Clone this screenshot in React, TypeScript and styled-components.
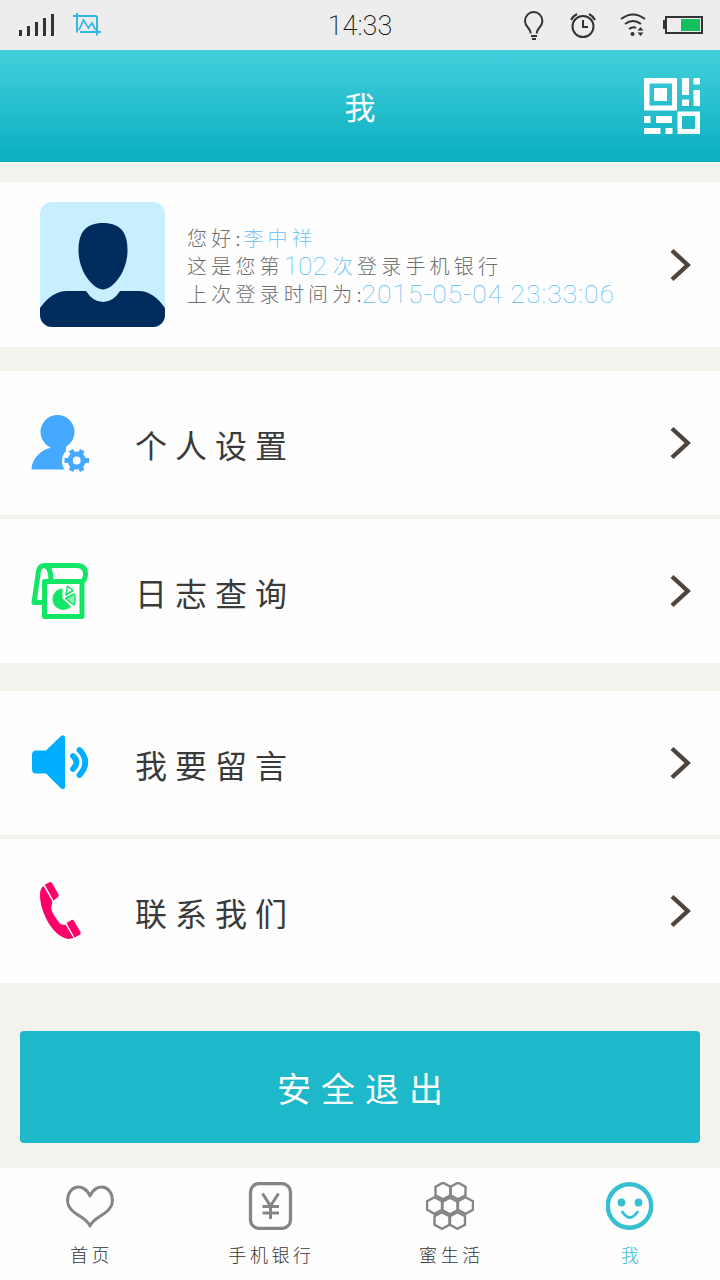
import React from "react";
import styled, { createGlobalStyle } from "styled-components";

const Global = createGlobalStyle`
  * { box-sizing: border-box; }
  body {
    margin: 0;
    background: #f3f2ed;
    font-family: "Noto Sans CJK SC", sans-serif;
    font-weight: 300;
  }
  svg { display: block; flex: none; }
`;

const Screen = styled.div`
  width: 720px;
  height: 1280px;
  display: flex;
  flex-direction: column;
  background: #f3f2ed;
  overflow: hidden;
`;

const StatusBar = styled.div`
  height: 50px;
  flex: none;
  display: grid;
  grid-template-columns: 1fr auto 1fr;
  align-items: center;
  background: #ededed;
  color: #111;
`;

const StatusGroup = styled.div<{ $end?: boolean }>`
  display: flex;
  align-items: center;
  justify-content: ${(p) => (p.$end ? "flex-end" : "flex-start")};
  padding: ${(p) => (p.$end ? "0 16px 0 0" : "0 0 0 19px")};
`;

const Signal = styled.div`
  margin-right: 18px;
`;

const Clock = styled.time`
  padding-top: 2px;
  font-family: Roboto, sans-serif;
  font-size: 27px;
  font-weight: 200;
  line-height: 48px;
`;

const Header = styled.header`
  height: 112px;
  flex: none;
  display: grid;
  grid-template-columns: 1fr auto 1fr;
  align-items: center;
  padding: 0 20px;
  background: linear-gradient(#43cfdb, #0aafc1);
  color: #fff;
`;

const Title = styled.h1`
  grid-column: 2;
  margin: 0;
  font-size: 31px;
  font-weight: 400;
  line-height: 112px;
`;

const CodeButton = styled.div`
  justify-self: end;
`;

const Profile = styled.section`
  height: 165px;
  flex: none;
  margin-top: 20px;
  padding: 0 29px 0 40px;
  display: flex;
  align-items: center;
  background: #fefefe;
`;

const Avatar = styled.div`
  width: 125px;
  height: 125px;
  border-radius: 12px;
  overflow: hidden;
  background: #c8efff;
`;

const Greeting = styled.div`
  flex: 1;
  margin-left: 22px;
  padding-top: 2px;
  color: #6f6f6f;
`;

const Line = styled.div`
  display: flex;
  height: 28px;
  font-size: 20px;
  line-height: 28px;
  letter-spacing: 4.2px;
  white-space: pre;
`;

const Accent = styled.span`
  color: #7cc5fa;
`;

const Colon = styled.span<{ $width: number }>`
  width: ${(p) => p.$width}px;
  letter-spacing: 0;
`;

const Digits = styled.span<{ $width: number; $spacing: number }>`
  width: ${(p) => p.$width}px;
  font-family: Roboto, sans-serif;
  font-size: 26.5px;
  font-weight: 100;
  letter-spacing: ${(p) => p.$spacing}px;
  color: #5ab8fa;
`;

const Group = styled.section<{ $gap: number }>`
  flex: none;
  margin-top: ${(p) => p.$gap}px;
  display: flex;
  flex-direction: column;
  gap: 4px;
`;

const Row = styled.div`
  height: 144px;
  padding: 0 29px 0 30px;
  display: flex;
  align-items: center;
  background: #fefefe;
`;

const RowLabel = styled.span`
  flex: 1;
  margin-left: 43px;
  padding-top: 1px;
  color: #3a3a3a;
  font-size: 32px;
  font-weight: 400;
  line-height: 48px;
  letter-spacing: 8px;
`;

const Logout = styled.button`
  height: 112px;
  flex: none;
  margin: 48px 20px 0;
  padding: 0 0 0 10px;
  border: 0;
  border-radius: 4px;
  background: #1db8c9;
  color: #fff;
  font: 400 34px "Noto Sans CJK SC", sans-serif;
  letter-spacing: 10px;
`;

const TabBar = styled.nav`
  height: 112px;
  flex: none;
  margin-top: 25px;
  display: grid;
  grid-template-columns: repeat(4, 1fr);
  background: #fefefe;
`;

const Tab = styled.div<{ $active?: boolean }>`
  display: flex;
  flex-direction: column;
  align-items: center;
  padding-top: 14px;
  color: ${(p) => (p.$active ? "#35bfd0" : "#333")};
`;

const TabLabel = styled.span`
  margin-top: 11px;
  padding-left: 3px;
  font-size: 18px;
  line-height: 27px;
  letter-spacing: 3.6px;
`;

const Chevron = () => (
  <svg width="22" height="34" viewBox="0 0 22 34" fill="none" stroke="#4e443e" strokeWidth="4.4">
    <path d="M3 2.500 18.700 17 3 31.500" />
  </svg>
);

const SignalIcon = () => (
  <svg width="36" height="24" viewBox="0 0 36 24" fill="#333">
    <path d="M0 17h3v6H0zM8 13h3v10H8zM16 9h3v14h-3zM24 5h3v18h-3zM32 1h3v22h-3z" />
  </svg>
);

const CaptureIcon = () => (
  <svg width="30" height="26" viewBox="0 0 30 26" fill="none" stroke="#30b8e8" strokeWidth="2">
    <path d="M0 4H22.500q1.500 0 1.500 1.500V23.500M4 1V20.500M7 20H28" />
    <path d="M6 18 10.500 8l5 8 3.500-5 3.500 7" strokeWidth="1.700" />
  </svg>
);

const StatusIcons = () => (
  <svg width="182" height="36" viewBox="522 7 182 36" fill="none" stroke="#333" strokeWidth="2">
    <path d="M530.700 33.500c0-6-5.700-6-5.700-12.500a8.700 9 0 0 1 17.400 0c0 6.500-5.700 6.500-5.700 12.500M531 36h6M532 39h4" />
    <circle cx="583" cy="26.500" r="10.500" />
    <path d="M583 20v7h5M571 20q2-4 6-6M589 14q4 2 6 6" />
    <path d="M621 19q12-9 24 0M625 24q8-6 16 0M629 29q4-3 7-1" />
    <circle cx="632.500" cy="34" r="2" fill="#333" stroke="none" />
    <path d="M640.500 27l3 3.500h-6zM640.500 36l3-3.500h-6z" fill="#333" stroke="none" />
    <path d="M666 17h36v16h-36z" />
    <path d="M663 20h3v9h-3z" fill="#333" stroke="none" />
    <path d="M681 19h19v12h-19z" fill="#12c15c" stroke="none" />
  </svg>
);

const CodeIcon = () => (
  <svg width="56" height="56" viewBox="0 0 56 56" fill="#fff">
    <path fillRule="evenodd" d="M0 0h33v32.500H0zM5.500 5.500v22h22.500V5.500z" />
    <path d="M10 10h13v13H10zM38 0h7v17h-7zM49.500 0h6.500v6.500h-6.500zM49.500 12h6.500v16h-6.500zM38 21.500h7v6.500h-7zM0 38h6.500v7H0zM12 38h16v7H12zM0 50h16.500v6H0zM21.500 50h7v6h-7z" />
    <path fillRule="evenodd" d="M33.500 33.500h22.500v22.500H33.500zM38 38v13h13V38z" />
  </svg>
);

const Portrait = () => (
  <svg width="125" height="125" viewBox="0 0 125 125" fill="#002c5d">
    <path d="M63 21C80 21 87.500 30 87.500 48 87.500 71 72 87.500 63 87.500S38.500 71 38.500 48C38.500 30 46 21 63 21Z" />
    <path d="M0 106Q12 89 27 89H46Q53 100 63 100T80 89H99Q113 89 125 106V125H0Z" />
  </svg>
);

const PersonGearIcon = () => (
  <svg width="62" height="62" viewBox="0 0 62 62" fill="#45aaff">
    <circle cx="27.500" cy="20" r="17" />
    <path d="M20 34.500H36V57.500H1.500C2 46 11 38 20 36Z" />
    <circle cx="47" cy="49" r="15" fill="#fefefe" />
    <circle cx="46.700" cy="48.500" r="6.500" fill="none" stroke="#45aaff" strokeWidth="5.200" />
    <path
      d="M54 48.500h5M34.500 48.500h5M50.300 42l2-3.800M41 58.800l2-3.800M43 42l-2-3.800M52.300 58.800l-2-3.800"
      stroke="#45aaff"
      strokeWidth="5"
    />
  </svg>
);

const JournalIcon = () => (
  <svg width="62" height="62" viewBox="0 0 62 62" fill="none" stroke="#13e667" strokeWidth="5" strokeLinejoin="round">
    <path d="M14.500 21.500H52V56.500H14.500Z" />
    <path d="M12 42.500H4L8.500 11Q9.500 5.500 15 5.500H47Q55.500 5.500 55.500 14 55.500 21 51 21.500M14 5.500Q21 6 21 21" strokeWidth="5" />
    <path d="M32.500 38.500V28.500A10.700 10.700 0 1 0 41 46.500Z" fill="#13e667" stroke="none" />
    <path d="M36 35 37.500 26 43 30.500Z" strokeWidth="1.500" />
    <path d="M35.500 38.500 44 34Q46.500 39 44 45Z" fill="#8bf0b4" strokeWidth="1.500" />
  </svg>
);

const SpeakerIcon = () => (
  <svg width="62" height="62" viewBox="0 0 62 62" fill="#00aeff">
    <path d="M6 18.500H16L31 4Q35 2 35 6V54Q35 59 31 56.500L16 41.500H6Q2 41.500 2 37V23Q2 18.500 6 18.500Z" />
    <path d="M43 24Q50 30 43 37M49.500 18Q61 30 49.500 43" fill="none" stroke="#00aeff" strokeWidth="5.800" strokeLinecap="round" />
  </svg>
);

const PhoneIcon = () => (
  <svg width="62" height="62" viewBox="0 0 62 62" fill="#ff006a">
    <path d="M13.500 6Q10 8 10 15C10 33 24 58 39 59L43.500 58 35.500 44.500Q31 46 28 41 20 31 21.500 26 22 23 22.500 21.500Z" />
    <path d="M14.800 4.800 19 2.500Q21 1.500 22 3L28.500 14.500Q29.500 16.500 27.500 17.500L23.500 20.500ZM36.500 43 41.500 40Q43 39 44 41L50.500 52Q51.500 54 49.500 55L44.500 57.500Z" />
  </svg>
);

const HeartIcon = () => (
  <svg width="48" height="48" viewBox="0 0 48 48" fill="none" stroke="#858585" strokeWidth="3" strokeLinejoin="round">
    <path d="M24 44C20.500 34 1.600 32 1.600 18.500 1.600 3 18 0 24 14 30 0 46.400 3 46.400 18.500 46.400 32 27.500 34 24 44Z" />
  </svg>
);

const YenIcon = () => (
  <svg width="48" height="48" viewBox="0 0 48 48" fill="none" stroke="#858585" strokeWidth="3.300">
    <rect x="4.500" y="1.600" width="40" height="44.800" rx="8.500" />
    <path d="M16.500 11.500 24.500 24 32.500 11.500M24.500 23V37M16.500 24.500H33M16.500 31H33" strokeWidth="3" />
  </svg>
);

const hexCells = [
  [17, 9],
  [32, 9],
  [8.5, 23.5],
  [24, 24],
  [39.5, 23.5],
  [16, 38.5],
  [31.5, 38.5],
];

const HiveIcon = () => (
  <svg width="48" height="48" viewBox="0 0 48 48" fill="none" stroke="#858585" strokeWidth="2.400">
    {hexCells.map(([x, y]) => (
      <path key={`${x}-${y}`} d={`M${x} ${y - 8.3}l7.500 4.100v8.400l-7.500 4.100l-7.500-4.100v-8.400z`} />
    ))}
  </svg>
);

const SmileIcon = () => (
  <svg width="48" height="48" viewBox="0 0 48 48" fill="none" stroke="#35bfd0">
    <circle cx="23.500" cy="24" r="21.700" strokeWidth="4.400" />
    <circle cx="15.500" cy="20.500" r="3.900" fill="#35bfd0" stroke="none" />
    <circle cx="32.500" cy="20.500" r="3.900" fill="#35bfd0" stroke="none" />
    <path d="M16.500 30Q23.500 41 31.500 30" strokeWidth="2.800" strokeLinecap="round" />
  </svg>
);

const menuGroups = [
  {
    gap: 24,
    items: [
      { label: "个人设置", Icon: PersonGearIcon },
      { label: "日志查询", Icon: JournalIcon },
    ],
  },
  {
    gap: 28,
    items: [
      { label: "我要留言", Icon: SpeakerIcon },
      { label: "联系我们", Icon: PhoneIcon },
    ],
  },
];

const tabs = [
  { label: "首页", Icon: HeartIcon },
  { label: "手机银行", Icon: YenIcon },
  { label: "蜜生活", Icon: HiveIcon },
  { label: "我", Icon: SmileIcon, active: true },
];

export default function App() {
  return (
    <Screen>
      <Global />
      <StatusBar>
        <StatusGroup>
          <Signal>
            <SignalIcon />
          </Signal>
          <CaptureIcon />
        </StatusGroup>
        <Clock>14:33</Clock>
        <StatusGroup $end>
          <StatusIcons />
        </StatusGroup>
      </StatusBar>
      <Header>
        <Title>我</Title>
        <CodeButton>
          <CodeIcon />
        </CodeButton>
      </Header>
      <Profile>
        <Avatar>
          <Portrait />
        </Avatar>
        <Greeting>
          <Line>
            您好<Colon $width={8}>:</Colon>
            <Accent>李中祥</Accent>
          </Line>
          <Line>
            这是您第<Digits $width={49} $spacing={-0.2}>102 </Digits>
            <Accent>次</Accent>登录手机银行
          </Line>
          <Line>
            上次登录时间为<Colon $width={5}>:</Colon>
            <Digits $width={260} $spacing={1}>2015-05-04 23:33:06</Digits>
          </Line>
        </Greeting>
        <Chevron />
      </Profile>
      {menuGroups.map((group) => (
        <Group key={group.gap} $gap={group.gap}>
          {group.items.map(({ label, Icon }) => (
            <Row key={label}>
              <Icon />
              <RowLabel>{label}</RowLabel>
              <Chevron />
            </Row>
          ))}
        </Group>
      ))}
      <Logout>安全退出</Logout>
      <TabBar>
        {tabs.map(({ label, Icon, active }) => (
          <Tab key={label} $active={active}>
            <Icon />
            <TabLabel>{label}</TabLabel>
          </Tab>
        ))}
      </TabBar>
    </Screen>
  );
}
